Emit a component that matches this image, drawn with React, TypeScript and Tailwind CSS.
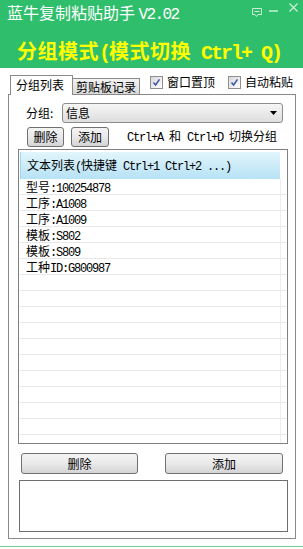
import React from 'react';

const rows: [string, string][] = [
  ['型号', ':100254878'],
  ['工序', ':A1008'],
  ['工序', ':A1009'],
  ['模板', ':S802'],
  ['模板', ':S809'],
  ['工种', 'ID:G800987'],
];

// SimSun 风格的半角字符：等宽，0.5em
function M({ children }: { children: React.ReactNode }) {
  return (
    <span className="font-['Liberation_Mono',monospace] tracking-[-0.1em]">
      {children}
    </span>
  );
}

function Check() {
  return (
    <span className="inline-flex h-[13px] w-[13px] shrink-0 items-center justify-center border border-[#8e8f8f] bg-linear-to-br from-[#d8d8d8] to-[#ffffff]">
      <svg width="9" height="9" viewBox="0 0 9 9">
        <path
          d="M1.5 4.5 L3.6 7 L7.5 1.3"
          stroke="#3b55a6"
          strokeWidth="1.5"
          fill="none"
        />
      </svg>
    </span>
  );
}

function Btn({ label, className }: { label: string; className: string }) {
  return (
    <div
      className={`flex items-center justify-center rounded-[3px] border border-[#707070] bg-linear-to-b from-[#f4f4f4] via-[#e9e9e9] to-[#d4d4d4] text-[12px] leading-[16px] text-black ${className}`}
    >
      {label}
    </div>
  );
}

export default function App() {
  const emptyRows = Array.from({ length: 11 });

  return (
    <div className="h-[549px] w-[303px] overflow-hidden bg-white font-['Noto_Sans_CJK_SC',sans-serif] text-black">
      {/* 标题栏 */}
      <header className="h-[68px] bg-[#2fbe6b]">
        <div className="flex items-start pl-[7px] pt-[2px]">
          <span className="text-[16px] leading-[20px] text-white">
            蓝牛复制粘贴助手 <M>V2.02</M>
          </span>
          <div className="ml-auto flex items-start">
            <svg width="10" height="10" viewBox="0 0 10 10" className="mt-[6px]">
              <path
                d="M0.5 0.5 H9.5 V6.5 H6 L4.5 8.5 L3 6.5 H0.5 Z"
                stroke="#c9f0d6"
                fill="none"
              />
              <path d="M2.5 3.5 H7.5" stroke="#c9f0d6" />
            </svg>
            <svg width="9" height="2" viewBox="0 0 9 2" className="ml-[7px] mt-[8px]">
              <path d="M0 1 H9" stroke="#c9f0d6" strokeWidth="1.5" />
            </svg>
            <svg width="9" height="9" viewBox="0 0 9 9" className="ml-[11px] mr-[5px] mt-[1px]">
              <path d="M0.5 0.5 L8.5 8.5 M8.5 0.5 L0.5 8.5" stroke="#c9f0d6" strokeWidth="1.3" />
            </svg>
          </div>
        </div>
        <div className="pl-[17px] pt-[14px] text-[20px] font-bold leading-[24px] tracking-[0.5px] text-[#ffff00]">
          分组模式<M>(</M>模式切换<M> Ctrl+ Q)</M>
        </div>
      </header>

      <div className="pl-[8px] pr-[7px]">
        {/* 选项卡 + 勾选 */}
        <div className="flex h-[26px] items-end pl-[2px]">
          <div className="relative z-10 -mb-px h-[20px] w-[63px] border-x border-t border-[#8a8a8a] bg-white pl-[5px] pt-[1px] text-[12px] leading-[16px]">
            分组列表
          </div>
          <div className="-ml-px h-[16px] w-[68px] border border-b-0 border-[#8a8a8a] bg-linear-to-b from-[#f3f3f3] to-[#d9d9d9] pl-[3px] text-[12px] leading-[15px]">
            剪贴板记录
          </div>
          <div className="ml-[10px] flex items-center self-start pt-[7px] text-[12px] leading-[14px]">
            <Check />
            <span className="ml-[4px]">窗口置顶</span>
            <span className="ml-[13px]">
              <Check />
            </span>
            <span className="ml-[4px]">自动粘贴</span>
          </div>
        </div>

        {/* 主面板 */}
        <div className="flex h-[445px] flex-col border border-[#8a8a8a] pt-[8px]">
          <div className="flex h-[20px] items-center">
            <span className="ml-[17px] w-[36px] text-[12px] leading-[16px]">分组:</span>
            <div className="flex h-[20px] w-[221px] items-center rounded-[3px] border border-[#8c8c8c] bg-linear-to-b from-[#f6f6f6] to-[#dedede] pl-[3px] pr-[5px] text-[12px] leading-[16px]">
              信息
              <svg width="7" height="4" viewBox="0 0 7 4" className="ml-auto">
                <path d="M0 0 H7 L3.5 4 Z" fill="#000" />
              </svg>
            </div>
          </div>

          <div className="mt-[4px] flex h-[20px] items-center">
            <Btn label="删除" className="ml-[18px] h-[20px] w-[37px]" />
            <Btn label="添加" className="ml-[7px] h-[20px] w-[38px]" />
            <span className="ml-[18px] text-[12px] leading-[16px]">
              <M>Ctrl+A </M>和<M> Ctrl+D </M>切换分组
            </span>
          </div>

          {/* 文本列表 */}
          <div className="ml-[9px] mt-[2px] h-[295px] w-[270px] overflow-hidden border border-[#808080] p-px">
            <div className="mr-[6px] mt-px flex h-[27px] items-center border-l border-[#9fd5ec] bg-linear-to-b from-[#e2f5fc] to-[#b6e2f5] pl-[6px] text-[12px] leading-[16px]">
              <span>
                文本列表<M>(</M>快捷键<M> Ctrl+1 Ctrl+2 ...)</M>
              </span>
            </div>
            {rows.map(([a, b], i) => (
              <div key={i} className="flex h-[16px] border-b border-[#e8e8e8]">
                <div className="flex-1 border-r border-[#eeeeee] pl-[6px] text-[12px] leading-[15px]">
                  {a}
                  <M>{b}</M>
                </div>
                <div className="w-[5px]" />
              </div>
            ))}
            {emptyRows.map((_, i) => (
              <div key={`e${i}`} className="flex h-[16px] border-b border-[#e8e8e8]">
                <div className="flex-1 border-r border-[#eeeeee]" />
                <div className="w-[5px]" />
              </div>
            ))}
          </div>

          <div className="mt-[9px] flex h-[21px]">
            <Btn label="删除" className="ml-[12px] h-[21px] w-[117px]" />
            <Btn label="添加" className="ml-[27px] h-[21px] w-[118px]" />
          </div>

          <div className="ml-[10px] mt-[6px] h-[52px] w-[269px] border border-[#6e6e6e] bg-white" />
        </div>
      </div>

      <div className="mt-[7px] h-px bg-[#6fd096]" />
    </div>
  );
}
